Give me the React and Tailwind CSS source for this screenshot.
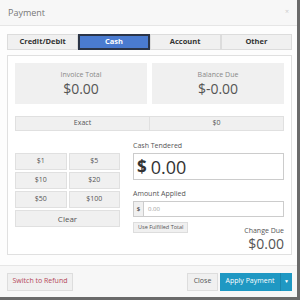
import React from 'react';

const Tab = ({ label, active }) => (
  <div
    className={`flex items-center justify-center text-[7.5px] font-bold ${
      active
        ? 'bg-[#4a7bd0] text-white border-2 border-[#2b3548]'
        : 'bg-[#f0f0f0] text-[#333] border border-[#dcdcdc]'
    }`}
  >
    {label}
  </div>
);

const CashBtn = ({ label, className = '' }) => (
  <div className={`h-[17px] flex items-center justify-center bg-[#f0f0f0] border border-[#e0e0e0] text-[7px] text-[#555] ${className}`}>
    {label}
  </div>
);

export default function App() {
  return (
    <div className="w-[300px] h-[300px] bg-[#6a6a6a] font-['Open_Sans',sans-serif]">
      <div className="w-[297px] h-[297px] bg-white flex flex-col">
        {/* Header */}
        <div className="h-[26px] bg-[#f7f7f7] border-b border-[#e6e6e6] flex items-center justify-between pl-[8px] pr-[8px] shrink-0">
          <span className="text-[9px] text-[#777]">Payment</span>
          <span className="text-[7px] text-[#ccc]">×</span>
        </div>

        {/* Body */}
        <div className="flex-1 px-[7px] pt-[8px] bg-[#fdfdfd]">
          <div className="grid grid-cols-4 h-[16px] w-[285px]">
            <Tab label="Credit/Debit" />
            <Tab label="Cash" active />
            <Tab label="Account" />
            <Tab label="Other" />
          </div>

          <div className="mt-[5px] w-[285px] h-[200px] border border-[#e0e0e0] bg-white px-[7px] pt-[7px]">
            {/* totals */}
            <div className="flex gap-[5px]">
              <div className="flex-1 h-[41px] bg-[#f0f0f0] flex flex-col items-center justify-center">
                <span className="text-[7px] text-[#888] leading-none">Invoice Total</span>
                <span className="text-[14px] text-[#555] leading-none mt-[4px]">$0.00</span>
              </div>
              <div className="flex-1 h-[41px] bg-[#f0f0f0] flex flex-col items-center justify-center">
                <span className="text-[7px] text-[#888] leading-none">Balance Due</span>
                <span className="text-[14px] text-[#555] leading-none mt-[4px]">$-0.00</span>
              </div>
            </div>

            {/* exact row */}
            <div className="flex mt-[12px] h-[15px]">
              <div className="flex-1 flex items-center justify-center bg-[#f0f0f0] border border-[#e0e0e0] text-[7px] text-[#555]">Exact</div>
              <div className="flex-1 flex items-center justify-center bg-[#f0f0f0] border border-l-0 border-[#e0e0e0] text-[7px] text-[#555]">$0</div>
            </div>

            <div className="flex mt-[6px]">
              {/* cash buttons */}
              <div className="w-[105px] pt-[16px] grid grid-cols-2 gap-[2px] content-start">
                <CashBtn label="$1" />
                <CashBtn label="$5" />
                <CashBtn label="$10" />
                <CashBtn label="$20" />
                <CashBtn label="$50" />
                <CashBtn label="$100" />
                <CashBtn label="Clear" className="col-span-2 text-[8px]" />
              </div>

              {/* right side */}
              <div className="ml-[13px] w-[151px] flex flex-col pt-[5px]">
                <span className="text-[7px] text-[#555] leading-none">Cash Tendered</span>
                <div className="mt-[4px] h-[27px] border border-[#ccc] flex items-center px-[3px]">
                  <span className="text-[17px] font-bold text-[#333] leading-none">$</span>
                  <span className="text-[18px] text-[#333] leading-none ml-[4px]">0.00</span>
                </div>
                <span className="mt-[10px] text-[7px] text-[#555] leading-none">Amount Applied</span>
                <div className="mt-[4px] h-[16px] border border-[#ccc] flex items-center">
                  <span className="w-[10px] h-full flex items-center justify-center bg-[#f0f0f0] border-r border-[#ccc] text-[6px] font-bold text-[#555]">$</span>
                  <span className="ml-[4px] text-[6px] text-[#999]">0.00</span>
                </div>
                <div className="flex justify-between mt-[5px]">
                  <div className="h-[11px] px-[4px] flex items-center bg-[#f0f0f0] border border-[#ddd] text-[5.5px] text-[#555]">Use Fulfilled Total</div>
                  <div className="flex flex-col items-end mt-[5px]">
                    <span className="text-[7px] text-[#555] leading-none">Change Due</span>
                    <span className="text-[14px] text-[#555] leading-none mt-[3px]">$0.00</span>
                  </div>
                </div>
              </div>
            </div>
          </div>
        </div>

        {/* Footer */}
        <div className="h-[32px] shrink-0 bg-[#f7f7f7] border-t border-[#e6e6e6] flex items-center justify-between pl-[7px] pr-[5px]">
          <div className="h-[18px] w-[66px] flex items-center justify-center bg-[#f0f0f0] border border-[#ddd] text-[7px] text-[#b5485a]">Switch to Refund</div>
          <div className="flex">
            <div className="h-[18px] w-[31px] flex items-center justify-center bg-[#f0f0f0] border border-[#ddd] text-[7px] text-[#555] mr-[2px]">Close</div>
            <div className="h-[18px] w-[60px] flex items-center justify-center bg-[#1f98c3] text-[7px] text-white">Apply Payment</div>
            <div className="h-[18px] w-[12px] flex items-center justify-center bg-[#1f98c3] border-l border-[#1a86ad] text-[5px] text-white">▼</div>
          </div>
        </div>
      </div>
    </div>
  );
}
